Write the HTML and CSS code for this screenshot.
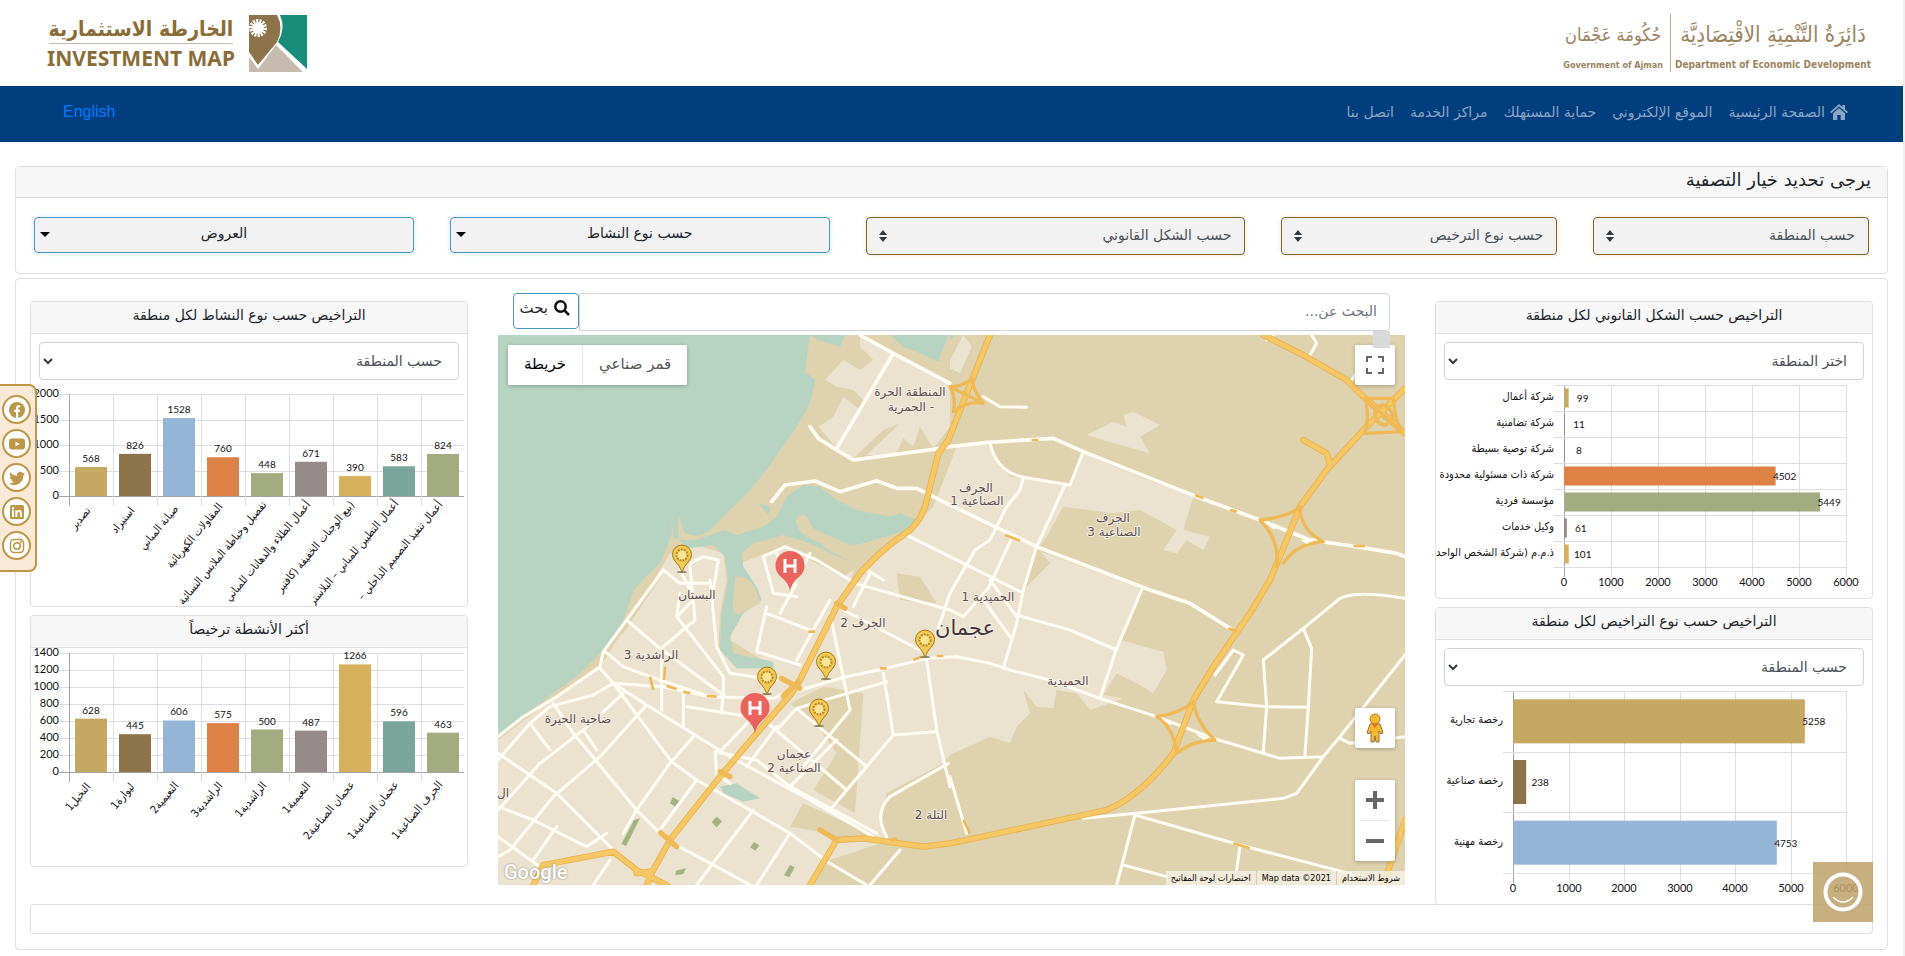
FILE: index.html
```
<!DOCTYPE html>
<html lang="ar" dir="rtl">
<head>
<meta charset="utf-8">
<title>الخارطة الاستثمارية</title>
<link rel="stylesheet" href="styles.css">
</head>
<body>
<header class="brand">
  <a class="gov-logo" href="#">
    <span class="gov-part dept"><span class="gov-ar">دَائِرَةُ التَّنْمِيَةِ الاقْتِصَادِيَّة</span><span class="gov-en" dir="ltr">Department of Economic Development</span></span>
    <span class="gov-part ajman"><span class="gov-ar">حُكُومَة عَجْمَان</span><span class="gov-en" dir="ltr">Government of Ajman</span></span>
  </a>
  <a class="map-logo" href="#">
    <svg class="map-logo-icon" viewBox="0 0 58 57" aria-hidden="true">
      <path d="M31 0H58V54L29 27Q37 13 31 0Z" fill="#178d7a"/>
      <path d="M0 57V42L9 54L27 30L54 57Z" fill="#c7bbb0"/>
      <path d="M0 0H28Q35 13 28 27L9 50L0 37Z" fill="#8d734a"/>
      <circle cx="9" cy="13" r="6" fill="#fff"/>
      <circle cx="9" cy="13" r="7" fill="none" stroke="#fff" stroke-width="4" stroke-dasharray="2 1.1"/>
    </svg>
    <span class="map-logo-text"><span class="map-logo-ar">الخارطة الاستثمارية</span><span class="map-logo-en" dir="ltr">INVESTMENT MAP</span></span>
  </a>
</header>
<nav class="nav">
  <div class="nav-links">
    <a href="#"><svg class="home" viewBox="0 0 18 16" aria-hidden="true"><path d="M9 0L0 8L1.200 9.300L9 2.500L16.800 9.300L18 8L15 5.300V1H12.500V3.100ZM9 4L3 9.200V16H7.300V11H10.700V16H15V9.200Z" fill="currentColor"/></svg>الصفحة الرئيسية</a>
    <a href="#">الموقع الإلكتروني</a>
    <a href="#">حماية المستهلك</a>
    <a href="#">مراكز الخدمة</a>
    <a href="#">اتصل بنا</a>
  </div>
  <a class="lang" href="#">English</a>
</nav>
<main class="page">
  <section class="card filters">
    <h1 class="filters-title">يرجى تحديد خيار التصفية</h1>
    <div class="filters-row">
      <div class="sel"><select class="filter-select" aria-label="حسب المنطقة"><option>حسب المنطقة</option></select><svg viewBox="0 0 8 12" aria-hidden="true"><path d="M4 0L8 5H0ZM4 12L0 7H8Z"/></svg></div>
      <div class="sel"><select class="filter-select" aria-label="حسب نوع الترخيص"><option>حسب نوع الترخيص</option></select><svg viewBox="0 0 8 12" aria-hidden="true"><path d="M4 0L8 5H0ZM4 12L0 7H8Z"/></svg></div>
      <div class="sel"><select class="filter-select" aria-label="حسب الشكل القانوني"><option>حسب الشكل القانوني</option></select><svg viewBox="0 0 8 12" aria-hidden="true"><path d="M4 0L8 5H0ZM4 12L0 7H8Z"/></svg></div>
      <button class="drop" type="button"><span>حسب نوع النشاط</span><svg viewBox="0 0 10 5" aria-hidden="true"><path d="M0 0H10L5 5Z"/></svg></button>
      <button class="drop" type="button"><span>العروض</span><svg viewBox="0 0 10 5" aria-hidden="true"><path d="M0 0H10L5 5Z"/></svg></button>
    </div>
  </section>
  <section class="card board">
    <div class="columns">
      <div class="side">
        <article class="card panel">
          <h2 class="panel-title">التراخيص حسب الشكل القانوني لكل منطقة</h2>
          <div class="sel region"><select aria-label="اختر المنطقة"><option>اختر المنطقة</option></select><svg viewBox="0 0 10 7" aria-hidden="true"><path class="chev" d="M1 1L5 5L9 1"/></svg></div>
          <svg class="chart" id="legal" viewBox="0 0 436 218"></svg>
        </article>
        <article class="card panel">
          <h2 class="panel-title">التراخيص حسب نوع التراخيص لكل منطقة</h2>
          <div class="sel region"><select aria-label="حسب المنطقة"><option>حسب المنطقة</option></select><svg viewBox="0 0 10 7" aria-hidden="true"><path class="chev" d="M1 1L5 5L9 1"/></svg></div>
          <svg class="chart" id="license" viewBox="0 0 436 218"></svg>
        </article>
      </div>
      <div class="center">
        <form class="search">
          <input type="text" placeholder="البحث عن..." aria-label="البحث عن">
          <button type="button"><svg viewBox="0 0 16 16" aria-hidden="true"><circle cx="6.500" cy="6.500" r="5.200"/><path d="M10.500 10.500L15 15"/></svg>بحث</button>
          <span class="handle"></span>
        </form>
        <div class="map" dir="ltr">
          <svg class="map-art" viewBox="0 0 907 550" preserveAspectRatio="xMidYMid slice">
            <g transform="translate(-8 -55) scale(.33333)" fill="none" stroke-linejoin="round" stroke-linecap="round">
              <path fill="#dfd2ae" d="M0 150H2800V1850H0Z"/>
              <g fill="#ebe3cf">
                <path d="M1110 165L1380 310V440L1330 505L1290 440L1270 500L1240 475L1215 530L1130 525L1230 430L1180 450L1090 535L1040 505L985 440L1030 410L1060 350L1110 390L1130 370L1090 330L1040 320L1005 300L1060 240L1110 270L1150 240L1110 200Z"/>
                <path d="M1380 240L1420 165L1445 200L1410 280L1380 265Z"/>
                <path d="M1790 465L1870 425L1910 440L1900 405L1930 395L2010 435L1950 470L1980 520L1890 495Z"/>
                <path d="M24 1380L150 1285L330 1160L420 1020L540 820L620 795L700 820L710 900L690 1000L685 1110L850 1160L720 1080L730 1030L790 970L815 960L750 850L880 800L1060 890L1180 810L1270 740L1330 680L1400 500L1490 490L1560 590L1740 615L1780 520L1950 590L2110 650L2080 750L2160 770L2140 810L2090 780L2060 820L2020 810L2060 750L1950 690L1870 700L1720 680L1670 770L1640 810L1940 920L1955 935L1890 1080L2020 1115L2030 1170L1990 1240L1940 1210L1880 1180L1840 1245L1900 1255L1800 1290L1760 1240L1700 1230L1690 1285L1640 1280L1600 1230L1620 1300L1580 1340L1560 1390L1500 1370L1380 1425L1360 1450L1190 1540L1170 1640L1200 1680L1020 1740L960 1815H24Z"/>
              </g>
              <g fill="#dfd2ae">
                <path d="M900 1270L1000 1220L1120 1240L1095 1600L970 1530L1040 1420L990 1350Z"/>
                <path d="M940 1570L1050 1620L1180 1680L1050 1680L1020 1660L900 1640Z"/>
                <path d="M1130 780L1180 810L1060 960L1000 1090L1060 950Z"/>
                <path d="M1220 880L1290 890L1340 970L1230 960Z"/>
                <path d="M460 900L520 880L400 1060L330 1110L410 980Z"/>
                <path d="M1640 800L1600 930L1680 850Z"/>
              </g>
              <g fill="#b7d3c2">
                <path d="M24 165H960L945 275L975 300L960 370L920 440L850 540L790 620L720 690L655 755L620 768L585 760L565 705V780L620 780L700 750L740 765L820 740L860 710L890 650L940 615L990 620L1040 660L1100 690L1200 710L1230 700L1280 720L1270 745L1220 760L1120 790L1080 795L1000 760L960 740L1000 800L1090 850L960 790L880 765L790 790L755 820L760 860L800 920L815 960L760 1000L720 1070L730 1120L850 1145V1165L740 1165L690 1110L695 1000L715 900L705 830L670 795L600 805L550 770L545 705V765L510 850L430 930L415 980L395 1030L340 1110L270 1180L150 1270L24 1365Z"/>
                <path d="M960 165H1065L1050 200L985 180ZM1200 165H1375L1345 245L1280 215L1240 200Z"/>
                <path d="M690 1520L740 1510L810 1555L760 1565L700 1540Z"/>
                <path d="M805 670L840 680L835 705ZM1380 165H1395L1380 185Z"/>
              </g>
              <path fill="#dfd2ae" d="M735 890Q790 880 810 970L770 990Q730 1020 728 980ZM920 710Q950 690 965 740L1020 780L1090 840L950 770Q910 740 920 710Z"/>
              <path fill="#a3b382" d="M432 1620L450 1615L408 1698L394 1692ZM548 1552L568 1562L556 1580L540 1570ZM680 1610L696 1624L680 1642L665 1626ZM792 1686L808 1696L796 1712L780 1702ZM558 1772L588 1764L580 1782L556 1786ZM900 1755L914 1762L898 1792L882 1786Z"/>
              <g stroke="#fffcf3" stroke-width="9">
                <path d="M1110 165L1210 220L1380 310M1210 220L1040 505M960 440L985 475L1040 510L1090 540L1330 508L1380 500L1495 487L1690 475L1780 515L2120 650L2310 720L2460 780L2600 800L2720 820L2745 830" stroke-width="11"/>
                <path d="M845 665L885 615L975 603L1050 635L1160 602L1220 625L1280 625L1370 670L1640 800L1980 930L2100 970L2220 1045" stroke-width="11"/>
                <path d="M1500 490Q1520 575 1600 592L1740 615L1780 515M1600 595L1590 630L1550 680L1500 780L1455 810L1380 940L1340 1060M1725 615L1640 800L1600 930L1580 1030L1540 1165M1240 760L1380 830L1590 935M1565 775L1495 925L1420 1010L1380 990M1480 350L1530 380L1610 382M2330 180L2350 165M2465 165L2480 190L2460 225M2585 300L2620 250L2660 210"/>
                <path d="M1955 930L1880 1105L1830 1255M1580 1005L1740 1050L1880 1110M1500 900L1580 1010M1480 960L1560 1070M930 1230L1070 1190L1190 1165L1310 1135L1400 1130L1500 1150L1560 1170L1680 1200L1830 1255L2000 1310L2170 1375L2370 1435L2500 1430L2550 1370L2745 1125"/>
                <path d="M2440 1045L2320 1140L2330 1280L2320 1415M2440 1045L2465 1105L2455 1280L2445 1425M2175 1185L2230 1110L2260 1125L2180 1265L2330 1280L2455 1282M2440 1045L2550 955Q2600 930 2745 955M2500 1430L2420 1540L2380 1555L1940 1600L1780 1615M1935 1605L1880 1815M1935 1605L2250 1695L2595 1785M1900 1755L2030 1790M2250 1700L2240 1770M2550 1375L2580 1390L2745 1370M1380 1490L1430 1660"/>
                <path d="M520 870L410 1020L340 1115L330 1160L200 1250L100 1310L24 1370M370 1210L470 1275L720 1430L960 1560L1150 1670M370 1210L520 1220L660 1250L850 1255L905 1230M330 1165L370 1210L310 1245L180 1280L120 1330L24 1440M410 1020L510 1105L700 1245M345 1115L400 1160L480 1190L660 1250"/>
                <path d="M190 1270L250 1360L440 1590L530 1680L680 1760L780 1815M120 1330L180 1410M24 1420L200 1540L370 1710M24 1580L130 1620L290 1700L350 1660M280 1350L320 1410M370 1210L545 1445L620 1500L780 1590L900 1660L1020 1750L1130 1815"/>
                <path d="M465 1280L330 1430L190 1550L60 1710L24 1730M400 1240L280 1350L150 1450L24 1590M610 1370L540 1450L440 1590L400 1660M620 1500L510 1650M790 1590L620 1815M900 1660L800 1815M200 1640L130 1740M24 1670L150 1760M360 1740L310 1815"/>
                <path d="M1040 1380L900 1520M860 1340L770 1460M1180 1180L1210 1365L1335 1355M1210 1365L1020 1590M1190 1205L920 1285L1130 1460M920 1285L860 1350M840 1335L1070 1530M1130 1460L1070 1530M1020 1000L1080 1290L940 1460M1310 1140L1340 1350L1380 1520M1375 1450L1200 1550Q1150 1600 1190 1670M1230 1710L1140 1815M720 1510L680 1480L675 1415L800 1440L900 1520L1160 1660M690 1415L790 1310M580 1240L580 1340M590 1280L780 1310M515 1120L515 1290M700 1220L695 1300"/>
                <path d="M660 900L680 1100L720 1180L860 1200M570 940L560 1010L700 1190V1250M600 860L615 1020L520 1100M560 1010L610 960M600 850L640 830L685 840L670 930M520 870L570 910L660 910M600 930L570 870M830 980L800 1115L930 1155M920 910L870 1000M830 1000L960 1050M1020 960L920 1140M1060 990L1290 1110M1095 910L1380 990M820 830L885 800L980 840L1080 900M820 830L850 940L920 950M860 820L900 930L960 820M1130 870L1180 900M1140 880L1090 980"/>
              </g>
              <path stroke="#e9b04b" stroke-width="19" d="M1500 165L1430 340L1375 480L1345 520L1310 660Q1295 730 1240 765T1110 880L1040 980L980 1100L930 1200L905 1240L800 1360L690 1490L540 1680L490 1770L470 1815M130 1815L160 1755L370 1715L440 1770L530 1815M480 1775L440 1780M960 1815L1040 1680L1120 1675L1300 1700L1380 1690L1500 1665L1850 1590Q1950 1550 2050 1420L2110 1260L2170 1160L2280 1000L2340 900L2390 780L2430 680L2510 570L2630 440L2745 325M2320 165L2430 220L2570 300L2620 350L2700 420L2745 460M2440 480L2510 520L2520 555M2680 1815L2745 1620"/>
              <path stroke="#f6c765" stroke-width="14" d="M1500 165L1430 340L1375 480L1345 520L1310 660Q1295 730 1240 765T1110 880L1040 980L980 1100L930 1200L905 1240L800 1360L690 1490L540 1680L490 1770L470 1815M130 1815L160 1755L370 1715L440 1770L530 1815M480 1775L440 1780M960 1815L1040 1680L1120 1675L1300 1700L1380 1690L1500 1665L1850 1590Q1950 1550 2050 1420L2110 1260L2170 1160L2280 1000L2340 900L2390 780L2430 680L2510 570L2630 440L2745 325M2320 165L2430 220L2570 300L2620 350L2700 420L2745 460M2440 480L2510 520L2520 555M2680 1815L2745 1620"/>
              <path stroke="#efb955" stroke-width="10" d="M1380 320Q1420 320 1447 295Q1447 330 1480 370Q1435 360 1390 395Q1400 360 1380 320ZM1380 320L1480 370M2625 355H2710Q2715 420 2735 455L2625 460Q2640 410 2625 355ZM2625 355L2735 455M2655 390Q2680 360 2700 390Q2720 420 2685 435Q2650 430 2655 390M2000 1310Q2070 1300 2110 1265Q2120 1330 2175 1380Q2110 1380 2060 1420Q2050 1340 2000 1310M2310 720Q2370 780 2360 860M2310 720Q2400 710 2430 680Q2430 750 2500 785M2500 785Q2420 790 2380 850"/>
              <path stroke="#efb955" stroke-width="16" d="M875 1195L930 1225M880 1248L925 1205M690 1475L720 1490M512 1658L560 1700M990 1650L1040 1680M1040 970L1065 985"/>
              <path stroke="#efb955" stroke-width="8" stroke-linecap="butt" d="M1545 765L1590 782M2115 645L2140 655M2220 690L2240 695M1625 480H1645M2590 798H2625M955 1055H975M1270 1140L1295 1130M1340 1128H1360M1420 1620L1440 1660M2230 1690L2280 1705M530 1218L560 1228M580 1235L600 1240M650 1248L680 1250M480 1190L490 1230M525 1160L522 1200M1200 1680L1220 1675M2215 1045L2240 1055M1170 1165H1190"/>
              <path fill="#fffcf3" d="M2012 1315L2050 1325L2040 1335ZM2115 1360L2155 1375L2140 1380ZM2325 728L2365 742L2350 748ZM2430 780L2480 775L2450 792Z"/>
            </g>
            <g id="labels" class="map-labels"></g>
            <g id="pins"></g>
          </svg>
          <div class="map-type"><button type="button" class="on">خريطة</button><button type="button">قمر صناعي</button></div>
          <button type="button" class="map-btn full" aria-label="ملء الشاشة"><svg viewBox="0 0 18 18" aria-hidden="true"><path d="M1 6V1H6M12 1H17V6M17 12V17H12M6 17H1V12"/></svg></button>
          <button type="button" class="map-btn person" aria-label="التجوّل الافتراضي"><svg viewBox="0 0 18 30" aria-hidden="true"><path d="M4 11Q9 9 14 11L17 20L15 21L13 18V29H10L9 23L8 29H5V18L3 21L1 20Z" fill="#fbb72c" stroke="#8d734a"/><circle cx="9" cy="6" r="5" fill="#fbb72c" stroke="#a98535"/><path d="M6 11L9 15L12 11Z" fill="#e2722b"/></svg></button>
          <div class="zoom"><button type="button" aria-label="تكبير"><svg viewBox="0 0 18 18" aria-hidden="true"><path d="M0 9H18M9 0V18"/></svg></button><button type="button" aria-label="تصغير"><svg viewBox="0 0 18 18" aria-hidden="true"><path d="M0 9H18"/></svg></button></div>
          <span class="google">Google</span>
          <div class="credits"><button type="button">اختصارات لوحة المفاتيح</button><span>Map data ©2021</span><a href="#">شروط الاستخدام</a></div>
        </div>
      </div>
      <div class="side">
        <article class="card panel">
          <h2 class="panel-title">التراخيص حسب نوع النشاط لكل منطقة</h2>
          <div class="sel region"><select aria-label="حسب المنطقة"><option>حسب المنطقة</option></select><svg viewBox="0 0 10 7" aria-hidden="true"><path class="chev" d="M1 1L5 5L9 1"/></svg></div>
          <svg class="chart" id="activity" viewBox="0 0 436 226"></svg>
        </article>
        <article class="card panel">
          <h2 class="panel-title">أكثر الأنشطة ترخيصاً</h2>
          <svg class="chart" id="top" viewBox="0 0 436 218"></svg>
        </article>
      </div>
    </div>
    <div class="card footer-card"></div>
  </section>
</main>
<aside class="social">
  <a href="#" aria-label="Facebook"><svg viewBox="0 0 16 16"><circle cx="8" cy="8" r="8"/><path class="inv" d="M7 16V10H5V7.700H7V6Q7 3.200 9.700 3.200H11.200V5.300H10Q9.200 5.300 9.200 6.200V7.700H11.200L10.800 10H9.200V16Z"/></svg></a>
  <a href="#" aria-label="YouTube"><svg viewBox="0 0 16 16"><rect y="2.500" width="16" height="11" rx="3"/><path class="inv" d="M6.500 5.500L10.800 8L6.500 10.500Z"/></svg></a>
  <a href="#" aria-label="Twitter"><svg viewBox="0 0 16 16"><path d="M16 3.500Q15.200 3.900 14.300 4Q15.300 3.400 15.600 2.300Q14.700 2.900 13.600 3.100A3.200 3.200 0 0 0 8 6Q4 5.800 1.300 2.500Q0 5 2.300 6.900Q1.500 6.900 .8 6.500Q.9 9 3.400 9.700Q2.700 9.900 2 9.800Q2.700 11.800 5 12Q3 13.600 0 13.400Q5 16.300 10 13.700Q14.500 11 14.400 5.100Q15.400 4.400 16 3.500Z"/></svg></a>
  <a href="#" aria-label="LinkedIn"><svg viewBox="0 0 16 16"><rect x="1" y="1" width="14" height="14" rx="1.500"/><path class="inv" d="M3 6.300H5V13H3ZM6.300 6.300H8.200V7.200Q8.800 6.100 10.300 6.100Q12.900 6.100 12.900 9.200V13H10.900V9.600Q10.900 7.900 9.700 7.900Q8.300 7.900 8.300 9.600V13H6.300Z"/><circle class="inv" cx="4" cy="4.200" r="1.200"/></svg></a>
  <a href="#" aria-label="Instagram"><svg viewBox="0 0 16 16" class="line"><rect x="1.500" y="1.500" width="13" height="13" rx="3.500"/><circle cx="8" cy="8" r="3.200"/><circle cx="11.800" cy="4.200" r=".4"/></svg></a>
</aside>
<button class="happy" type="button" aria-label="مؤشر السعادة"><svg viewBox="0 0 40 40"><circle cx="20" cy="20" r="17.500" stroke-width="4"/><path d="M10 25Q20 35 30 25" stroke-width="1.500"/></svg></button>
<script src="charts.js"></script>
</body>
</html>
```
FILE: styles.css
```
* { box-sizing: border-box; }
html { font-family: "DejaVu Sans", sans-serif; font-size: 14px; color: #212529; background: #fff; }
body { margin: 0; border-right: 2px solid #f0f0f0; }
a { text-decoration: none; color: inherit; }
button, input, select { font: inherit; color: inherit; margin: 0; }
h1, h2 { margin: 0; font-weight: 400; }

.brand { display: flex; justify-content: space-between; align-items: center; height: 86px; padding: 0 32px 0 47px; }
.gov-logo { display: flex; color: #9b8460; font-family: "DejaVu Sans Condensed", "DejaVu Sans", sans-serif; }
.gov-part { display: flex; flex-direction: column; align-items: center; justify-content: space-between; height: 58px; }
.dept { padding-left: 4px; border-left: 1px solid #b9a888; }
.ajman { padding-right: 7px; }
.gov-ar { font-size: 18px; line-height: 42px; white-space: nowrap; }
.dept .gov-ar { font-size: 22px; }
.gov-en { font-weight: 700; font-size: 9px; line-height: 14px; }
.dept .gov-en { font-size: 10px; }
.map-logo { display: flex; gap: 14px; align-items: center; }
.map-logo-icon { width: 58px; height: 57px; }
.map-logo-text { display: flex; flex-direction: column; align-items: center; color: #8a6d36; font-weight: 700; }
.map-logo-ar { font-family: "DejaVu Sans Condensed", "DejaVu Sans", sans-serif; font-size: 21px; line-height: 28px; border-bottom: 1px solid #c7bbb0; white-space: nowrap; }
.map-logo-en { font: 700 21px/28px "Noto Sans", sans-serif; white-space: nowrap; }

.nav { display: flex; justify-content: space-between; align-items: center; height: 56px; padding: 0 55px 4px 63px; background: #003e7e; }
.nav-links { display: flex; gap: 16px; color: #8ba6c4; }
.nav-links a { display: flex; align-items: center; gap: 5px; white-space: nowrap; }
.home { width: 18px; height: 16px; }
.nav .lang { color: #007bff; font: 16px/24px "Liberation Sans", sans-serif; }

.page { padding: 24px 15px 6px; }
.card { border: 1px solid #dfdfdf; border-radius: 4px; background: #fff; }
.filters-title { height: 31px; padding: 0 16px; line-height: 26px; font-size: 18px; color: #212529; background: #f7f7f7; border-bottom: 1px solid #d9d9d9; }
.filters-row { display: grid; grid-template-columns: 3fr 3fr 4fr 4fr 4fr; align-items: start; padding: 19px 0 18px; }
.filters-row > * { margin: 0 18px; }
.sel { position: relative; display: flex; }
.sel select { flex: 1; min-width: 0; height: 38px; padding: 0 13px 2px; border-radius: 4px; appearance: none; color: #495057; }
.sel svg { position: absolute; left: 13px; top: 13px; width: 8px; height: 12px; fill: #343a40; pointer-events: none; }
.filter-select { border: 1px solid #806128; background: #f2f2f2; box-shadow: 0 0 6px #f6ecd4; }
.drop { position: relative; height: 36px; padding: 0 12px 4px; border: 1px solid #4896c8; border-radius: 4px; background: #f2f2f2; box-shadow: 0 0 6px #d8ecf6; color: #212529; }
.drop svg { position: absolute; left: 5px; top: 14px; width: 10px; height: 5px; }

.board { margin-top: 4px; padding: 14px 14px 15px; }
.columns { display: grid; grid-template-columns: minmax(0, 438fr) minmax(0, 907fr) minmax(0, 438fr); gap: 30px; }
.side { display: flex; flex-direction: column; gap: 8px; padding-top: 8px; }
.panel { overflow: hidden; }
.panel-title { height: 32px; padding: 0 8px; text-align: center; font-size: 14px; line-height: 27px; background: #f7f7f7; border-bottom: 1px solid #dfdfdf; white-space: nowrap; }
.region { margin: 8px 8px 0; }
.region select { border: 1px solid #ced4da; background: #fff; padding: 0 16px; font-size: 14px; }
.region svg { left: 4px; top: 16px; width: 10px; height: 7px; }
.chev { fill: none; stroke: #343a40; stroke-width: 2; }
.chart { display: block; width: 100%; direction: ltr; font-family: "DejaVu Sans Condensed", "DejaVu Sans", sans-serif; font-size: 11px; fill: #111; }
.chart .tick, .chart .value { font-family: "Lato", sans-serif; }
.chart .value { font-size: 10px; }
.grid { stroke: #dedede; stroke-width: 1; fill: none; shape-rendering: crispEdges; }
.axis { stroke: #a5a5a5; stroke-width: 1; fill: none; shape-rendering: crispEdges; }
.footer-card { height: 30px; margin-top: -1px; }

.center { display: flex; flex-direction: column; gap: 4px; }
.search { position: relative; display: flex; align-items: flex-start; padding: 0 15px; }
.search input { flex: 1; min-width: 0; height: 38px; padding: 0 12px 2px; border: 1px solid #ced4da; border-radius: 0 4px 4px 0; background: #fff; }
.search input::placeholder { color: #6c757d; opacity: 1; }
.search button { display: flex; align-items: center; gap: 6px; width: 66px; height: 36px; padding: 0 8px 6px 6px; border: 1px solid #4896c8; border-radius: 4px; background: #fff; font-size: 15px; }
.search button svg { width: 16px; height: 16px; fill: none; stroke: #111; stroke-width: 2.500; flex: none; }
.handle { position: absolute; z-index: 2; right: 15px; top: 38px; width: 17px; height: 17px; background: #d9d9db; }
.map { position: relative; height: 550px; overflow: hidden; }
.map-art { display: block; width: 100%; height: 100%; }
.map-labels { font-size: 12px; fill: #5c4c50; text-anchor: middle; paint-order: stroke; stroke: #f5f0e4; stroke-width: 2px; }
.map-labels .city { font-size: 21px; fill: #43363a; }
.map button { border: 0; background: #fff; padding: 0; }
.map-type { position: absolute; left: 10px; top: 10px; display: flex; height: 40px; border-radius: 2px; background: #fff; box-shadow: 0 1px 4px #0004; }
.map .map-type button { padding: 0 16px 2px; color: #565656; font-size: 15px; border-radius: 2px; }
.map .map-type .on { color: #000; border-right: 1px solid #e6e6e6; }
.map-btn, .zoom { position: absolute; right: 10px; width: 40px; border-radius: 2px; background: #fff; box-shadow: 0 1px 4px #0004; }
.map-btn { display: grid; place-items: center; height: 40px; }
.full { top: 10px; }
.full svg, .zoom svg { width: 18px; height: 18px; fill: none; stroke: #666; stroke-width: 2; }
.person { bottom: 137px; }
.person svg { width: 18px; height: 30px; }
.zoom { bottom: 24px; display: flex; flex-direction: column; padding: 0 5px; }
.zoom button { display: grid; place-items: center; height: 40px; }
.map .zoom button + button { border-top: 1px solid #e6e6e6; height: 41px; }
.zoom svg { stroke-width: 4; }
.google { position: absolute; left: 6px; bottom: 1px; color: #fff; font: 500 20px/24px "Roboto", sans-serif; text-shadow: 0 0 2px #777; }
.credits { position: absolute; right: 0; bottom: 0; display: flex; height: 14px; background: #f5f1e6cc; font-family: "DejaVu Sans Condensed", "DejaVu Sans", sans-serif; font-size: 9px; line-height: 14px; color: #000; }
.credits > * { padding: 0 5px; }
.credits span { border: 1px solid #d5ccb5; border-width: 0 1px; }
.map .credits button { background: none; padding: 0 5px; }

.social { position: fixed; z-index: 3; left: 0; top: 384px; display: flex; flex-direction: column; gap: 5px; padding: 9px 4px 10px 2px; border: 2px solid #bd9647; border-left: 0; border-radius: 0 8px 8px 0; background: #f9ead8; }
.social a { display: grid; place-items: center; width: 29px; height: 29px; border: 2px solid #bd9647; border-radius: 50%; background: #fff; }
.social svg { width: 16px; height: 16px; fill: #bd9647; }
.social .inv { fill: #fff; }
.social .line { fill: none; stroke: #bd9647; stroke-width: 1.500; }
.happy { position: fixed; z-index: 3; right: 32px; bottom: 34px; display: grid; place-items: center; width: 60px; height: 60px; padding: 0; border: 0; background: #bfa36cdd; }
.happy svg { width: 40px; height: 40px; fill: none; stroke: #fff; }
```
FILE: charts.js
```
const NS = "http://www.w3.org/2000/svg";
const gold = "#c5a963", brown = "#8d734a", blue = "#94b5d5", orange = "#de8145", green = "#a3ab80", grey = "#968a8a", amber = "#d6b05a", teal = "#7aa59b";

function add(parent, name, attrs, text) {
  const el = document.createElementNS(NS, name);
  for (const key in attrs) el.setAttribute(key, attrs[key]);
  if (text !== undefined) el.textContent = text;
  parent.appendChild(el);
  return el;
}

function columns(id, data, opt) {
  const svg = document.getElementById(id);
  const x0 = 38, x1 = 433, step = 44, height = opt.y1 - opt.y0;
  for (let v = 0; v <= opt.max; v += opt.tick) {
    const y = Math.round(opt.y1 - height * v / opt.max);
    add(svg, "path", { class: v ? "grid" : "axis", d: `M28 ${y}H${x1}` });
    add(svg, "text", { class: "tick", x: 28, y: y + 3, "text-anchor": "end" }, v);
  }
  for (let i = 0; i < data.length; i++) add(svg, "path", { class: i ? "grid" : "axis", d: `M${x0 + i * step} ${opt.y0}V${opt.y1 + 10}` });
  data.forEach(([name, value, color], i) => {
    const h = height * value / opt.max, x = x0 + i * step + 6, mid = x + 16;
    add(svg, "rect", { x, y: opt.y1 - h, width: 32, height: h, fill: color });
    add(svg, "text", { class: "value", x: mid, y: opt.y1 - h - 5, "text-anchor": "middle" }, value);
    const ly = opt.y1 + 16 - Math.min(8, Math.floor(name.length / 4));
    add(svg, "text", { x: mid, y: ly, "text-anchor": "end", transform: `rotate(-50 ${mid} ${ly})` }, name);
  });
}

function rows(id, data, opt) {
  const svg = document.getElementById(id);
  const x1 = 410, y0 = 5, y1 = 187, width = x1 - opt.x0, step = (y1 - y0) / data.length;
  for (let v = 0; v <= 6000; v += 1000) {
    const x = Math.round(opt.x0 + width * v / 6000);
    add(svg, "path", { class: v ? "grid" : "axis", d: `M${x} ${y0}V${y1 + 10}` });
    add(svg, "text", { class: "tick", x, y: 206, "text-anchor": "middle" }, v);
  }
  for (let i = 0; i <= data.length; i++) add(svg, "path", { class: "grid", d: `M${opt.x0 - 10} ${Math.round(y0 + i * step)}H${x1}` });
  data.forEach(([name, value, color], i) => {
    const w = Math.max(1, width * value / 6000), mid = y0 + step * (i + 0.5);
    add(svg, "rect", { x: opt.x0, y: mid - opt.bar / 2, width: w, height: opt.bar, fill: color });
    add(svg, "text", { class: "value", x: opt.x0 + w + (value > 999 ? 9 : 14), y: mid + 4, "text-anchor": "middle" }, value);
    add(svg, "text", { x: opt.x0 - 10, y: mid + 2, "text-anchor": "end" }, name);
  });
}

rows("legal", [["شركة أعمال", 99, gold], ["شركة تضامنية", 11, grey], ["شركة توصية بسيطة", 8, grey], ["شركة ذات مسئولية محدودة", 4502, orange], ["مؤسسة فردية", 5449, green], ["وكيل خدمات", 61, grey], ["ذ.م.م (شركة الشخص الواحد", 101, amber]], { x0: 128, bar: 19 });
rows("license", [["رخصة تجارية", 5258, gold], ["رخصة صناعية", 238, brown], ["رخصة مهنية", 4753, blue]], { x0: 77, bar: 44 });
columns("activity", [["تصدير", 568, gold], ["استيراد", 826, brown], ["صيانة المباني", 1528, blue], ["المقاولات الكهربائية", 760, orange], ["تفصيل وخياطة الملابس النسائية", 448, green], ["أعمال الطلاء والدهانات للمباني", 671, grey], ["\u200f(بيع الوجبات الخفيفة (كافتير", 390, amber], ["أعمال التطيين للمباني – البلاستر", 583, teal], ["أعمال تنفيذ التصميم الداخلي –\u200f", 824, green]], { y0: 14, y1: 116, max: 2000, tick: 500 });
columns("top", [["النخيل1", 628, gold], ["ليوارة1", 445, brown], ["النعيمية2", 606, blue], ["الراشدية3", 575, orange], ["الراشدية1", 500, green], ["النعيمية1", 487, grey], ["عجمان الصناعية2", 1266, amber], ["عجمان الصناعية1", 596, teal], ["الجرف الصناعية1", 463, green]], { y0: 5, y1: 124, max: 1400, tick: 200 });

const labels = document.getElementById("labels");
[["المنطقة الحرة", 412, 61], ["الحمرية -", 413, 76], ["الجرف", 478, 157], ["الصناعية 1", 479, 170], ["الجرف", 615, 187], ["الصناعية 3", 616, 201], ["الحميدية 1", 490, 266], ["الجرف 2", 365, 292], ["البستان", 199, 264], ["الراشدية 3", 153, 324], ["ضاحية الحيرة", 80, 388], ["الحميدية", 570, 350], ["عجمان", 296, 423], ["الصناعية 2", 296, 437], ["التلة 2", 433, 484], ["ال", 5, 462]].forEach(([t, x, y]) => add(labels, "text", { x, y }, t));
add(labels, "text", { class: "city", x: 467, y: 300 }, "عجمان");

const pins = document.getElementById("pins");
[[184, 237], [427, 322], [328, 344], [269, 359], [321, 391]].forEach(([x, y]) => {
  const g = add(pins, "g", { transform: `translate(${x} ${y})` });
  add(g, "ellipse", { cx: 0, cy: 0, rx: 5, ry: 1, fill: "#8c8168" });
  add(g, "path", { d: "M0 0Q-2 -6 -7 -11A9.500 9.500 0 1 1 7 -11Q2 -6 0 0Z", fill: "#f0c956", stroke: "#a87716" });
  add(g, "circle", { cx: 0, cy: -17, r: 5.500, fill: "#fbe493", stroke: "#b98a22", "stroke-width": 2, "stroke-dasharray": "2 1" });
});
[[292, 257], [257, 399]].forEach(([x, y]) => {
  const g = add(pins, "g", { transform: `translate(${x} ${y})` });
  add(g, "path", { d: "M0 0Q-1 -9 -10 -16A14.500 14.500 0 1 1 10 -16Q1 -9 0 0Z", fill: "#ec625c" });
  add(g, "path", { d: "M-5 -33V-19M5 -33V-19M-5 -26H5", stroke: "#fff", "stroke-width": 3, fill: "none" });
});
```
